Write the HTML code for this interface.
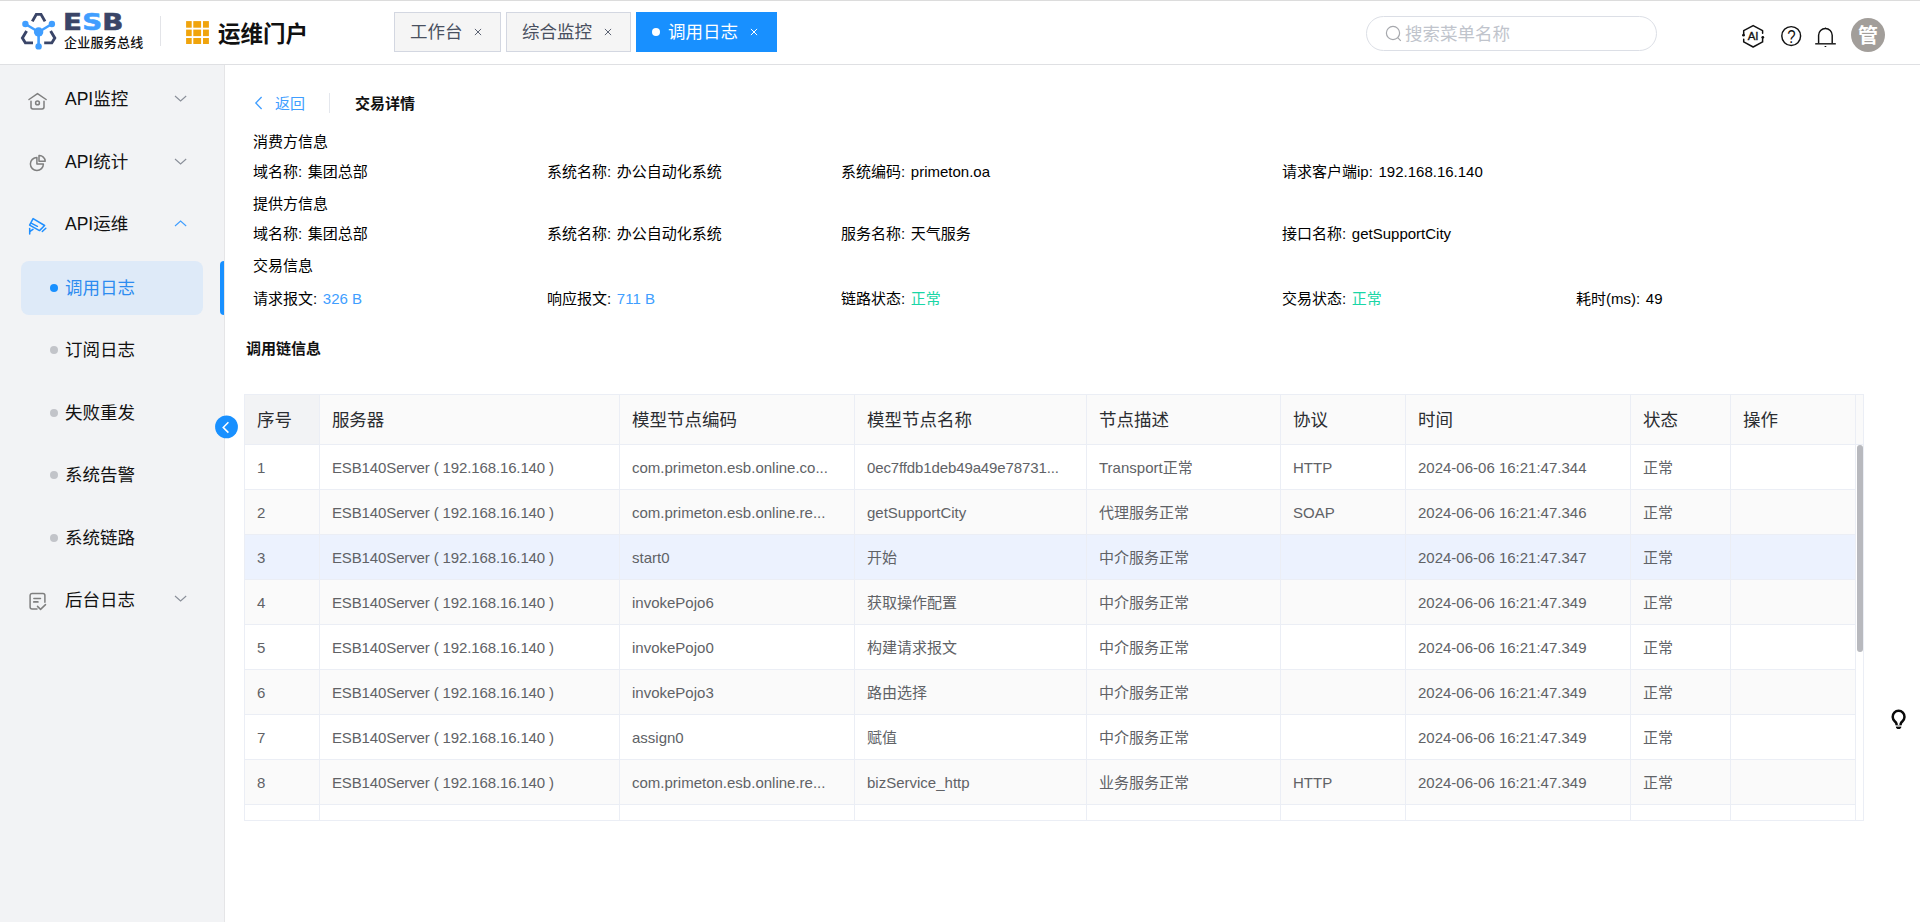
<!DOCTYPE html>
<html lang="zh-CN">
<head>
<meta charset="utf-8">
<title>ESB 运维门户 - 调用日志</title>
<style>
*{box-sizing:border-box;margin:0;padding:0}
html,body{width:1920px;height:922px;overflow:hidden;background:#fff}
body{font-family:"Liberation Sans","Noto Sans CJK SC",sans-serif;color:#1a1a1a;position:relative;font-size:15px}
.abs{position:absolute}
/* header */
#hdr{position:absolute;left:0;top:0;width:1920px;height:65px;background:#fff;border-bottom:1px solid #dfe0e3}
#topline{position:absolute;left:0;top:0;width:1920px;height:1px;background:#dcdcdc}
#logo{position:absolute;left:20px;top:12px;width:38px;height:38px}
#esb{position:absolute;left:62.6px;top:9.4px;font-family:"DejaVu Sans","Liberation Sans",sans-serif;font-weight:bold;font-size:22.5px;line-height:26px;letter-spacing:0.2px;color:#3a4567;-webkit-text-stroke:0.55px currentColor;transform-origin:0 0;transform:scaleX(1.23)}
#esb b{color:#409eff}
#esbsub{position:absolute;left:64px;top:34px;letter-spacing:0.25px;font-size:13px;line-height:18px;color:#111;font-weight:500;white-space:nowrap}
#hdiv{position:absolute;left:160px;top:16px;width:1px;height:30px;background:#e3e4e8}
#grid{position:absolute;left:186px;top:21px;width:23px;height:23px}
#portal{position:absolute;left:218px;top:18px;font-size:22.5px;line-height:34px;font-weight:bold;color:#111;white-space:nowrap}
.tab{position:absolute;top:12px;height:40px;border:1px solid #d3d7e1;background:#f5f5f5;color:#495060;font-size:17.5px;line-height:38px;white-space:nowrap}
.tab .x{position:absolute}
.tab.on{background:#1890ff;border-color:#1890ff;color:#fff}
.tab.on .x{color:#fff}
#search{position:absolute;left:1366px;top:16px;width:291px;height:35px;border:1px solid #dcdfe6;border-radius:18px;background:#fff}
#search span{position:absolute;left:38px;top:0;line-height:35px;font-size:17.5px;color:#c0c4cc;white-space:nowrap}
#avatar{position:absolute;left:1851px;top:18px;width:34px;height:34px;border-radius:50%;background:#a29e9a;color:#fff;font-weight:bold;font-size:20px;line-height:37px;text-align:center}
/* sidebar */
#side{position:absolute;left:0;top:65px;width:225px;height:857px;background:#f2f3f5;border-right:1px solid #e5e5e7}
.mi{position:absolute;left:65px;font-size:17.5px;line-height:24px;color:#111;white-space:nowrap}
.sub{position:absolute;left:65px;font-size:17.5px;line-height:24px;color:#111;white-space:nowrap}
.dot{position:absolute;left:50px;width:8px;height:8px;margin-top:-0.5px;border-radius:50%;background:#c2c4c9}
#actbg{position:absolute;left:21px;width:182px;height:54px;border-radius:8px;background:#deeaf8}
#actbar{position:absolute;left:220px;width:4px;height:54px;border-radius:5px 0 0 5px;background:#1890ff}
#collapse{position:absolute;left:213px;top:414px;width:27px;height:27px}
/* content */
.t{position:absolute;white-space:nowrap;font-size:15px;line-height:20px;color:#000;word-spacing:1.5px}
.t span{word-spacing:0}
.blue{color:#409eff}.green{color:#1ad6a6}
/* table */
#tbl{position:absolute;left:244px;top:394px;width:1620px;height:427px;border:1px solid #ebeef5;overflow:hidden;background:#fff}
.row{position:absolute;left:0;width:1611px;height:45px;border-bottom:1px solid #ebeef5}
.row.h{height:50px;background:#fafafa}
.row.e{background:#fafafa}
.row.hv{background:#ecf2fe}
.c{position:absolute;top:0;height:100%;border-left:1px solid #ebeef5;padding-left:12px;font-size:15px;color:#606266;line-height:45px;white-space:nowrap;overflow:hidden}
.row.h .c{font-size:17.5px;color:#2b2d31;line-height:51px}
.c1{left:-1px;width:75px}.c2{left:74px;width:300px;letter-spacing:-0.13px}.c3{left:374px;width:235px}.c4{left:609px;width:232px}.c5{left:841px;width:194px}.c6{left:1035px;width:125px}.c7{left:1160px;width:225px}.c8{left:1385px;width:100px}.c9{left:1485px;width:125px}
</style>
</head>
<body>
<div id="hdr">
<div id="topline"></div>
<svg id="logo" viewBox="20 12 38 38" width="38" height="38">
 <g fill="none" stroke="#3a4568" stroke-width="2.9" stroke-linejoin="miter">
  <polyline points="32.3,21.4 36.3,14.4 41,14.4 45,21.4"/>
  <polyline points="26.6,31 22.4,38 25.4,42.9 33,42.9"/>
  <polyline points="50.6,31 54.8,38 51.8,42.9 44.2,42.9"/>
 </g>
 <g stroke="#409eff" stroke-width="2.6" fill="#409eff">
  <line x1="38.6" y1="32" x2="25.4" y2="24"/>
  <line x1="38.6" y1="32" x2="51.9" y2="24"/>
  <line x1="38.6" y1="32" x2="38.6" y2="46.4"/>
 </g>
 <g fill="#409eff">
  <circle cx="38.6" cy="32" r="4.7"/>
  <circle cx="25.4" cy="24" r="3.2"/>
  <circle cx="51.9" cy="24" r="3.2"/>
  <circle cx="38.6" cy="46.4" r="3.2"/>
 </g>
</svg>
<div id="esb">E<b>S</b>B</div>
<div id="esbsub">企业服务总线</div>
<div id="hdiv"></div>
<svg id="grid" viewBox="0 0 23 23" width="23" height="23"><g fill="#f0a40c"><rect x="0.1" y="0.1" width="5.6" height="6.6"/><rect x="7.3" y="0.1" width="7.8" height="6.6"/><rect x="17" y="0.1" width="5.9" height="6.6"/><rect x="0.1" y="8.6" width="5.6" height="6.5"/><rect x="7.3" y="8.6" width="7.8" height="6.5"/><rect x="17" y="8.6" width="5.9" height="6.5"/><rect x="0.1" y="17" width="5.6" height="6.0"/><rect x="7.3" y="17" width="7.8" height="6.0"/><rect x="17" y="17" width="5.9" height="6.0"/></g></svg>
<div id="portal">运维门户</div>
<div class="tab" style="left:394px;width:107px"><span style="position:absolute;left:15px">工作台</span><svg class="x" style="left:79px;top:15px" width="8" height="8" viewBox="0 0 8 8"><path d="M0.9 0.9 L7.1 7.1 M7.1 0.9 L0.9 7.1" stroke="#5c6373" stroke-width="1" fill="none"/></svg></div>
<div class="tab" style="left:506px;width:125px"><span style="position:absolute;left:15px">综合监控</span><svg class="x" style="left:97px;top:15px" width="8" height="8" viewBox="0 0 8 8"><path d="M0.9 0.9 L7.1 7.1 M7.1 0.9 L0.9 7.1" stroke="#5c6373" stroke-width="1" fill="none"/></svg></div>
<div class="tab on" style="left:636px;width:141px"><i style="position:absolute;left:15px;top:15px;width:8px;height:8px;border-radius:50%;background:#fff"></i><span style="position:absolute;left:31px">调用日志</span><svg class="x" style="left:112.5px;top:15px" width="8" height="8" viewBox="0 0 8 8"><path d="M0.9 0.9 L7.1 7.1 M7.1 0.9 L0.9 7.1" stroke="#fff" stroke-width="1" fill="none"/></svg></div>
<div id="search">
<svg style="position:absolute;left:16.5px;top:6.5px" width="20" height="20" viewBox="0 0 20 20"><circle cx="9" cy="9" r="6.6" fill="none" stroke="#a6a8ad" stroke-width="1.2"/><line x1="13.7" y1="13.7" x2="16.8" y2="16.8" stroke="#a6a8ad" stroke-width="1.2"/></svg>
<span>搜索菜单名称</span></div>
<svg class="abs" style="left:1741px;top:24px" width="24" height="24" viewBox="0 0 24 24"><g fill="none" stroke="#111" stroke-width="1.5" stroke-linejoin="round" stroke-linecap="round"><path d="M2.7 11 V6.7 L12.15 1.6 L21.6 6.7 V9.2"/><path d="M21.6 13.4 V17.9 L12.15 23 L2.7 17.9 V15.2"/></g><circle cx="2.5" cy="11.2" r="1.35" fill="#111"/><circle cx="21.8" cy="13.3" r="1.35" fill="#111"/><text x="12.1" y="16.3" font-family="Liberation Sans, sans-serif" font-size="11.5" text-anchor="middle" fill="#111" stroke="#111" stroke-width="0.35">AI</text></svg>
<svg class="abs" style="left:1780px;top:25px" width="23" height="23" viewBox="0 0 23 23"><circle cx="11.2" cy="11" r="9.4" fill="none" stroke="#111" stroke-width="1.45"/><text x="13.2" y="18.2" font-family="Liberation Sans, sans-serif" font-size="17.5" text-anchor="middle" fill="#111" transform="scale(0.86 1)">?</text></svg>
<svg class="abs" style="left:1814px;top:25px" width="24" height="24" viewBox="0 0 24 24"><path d="M4.6 18.6 V10.3 a6.8 6.8 0 0 1 13.6 0 V18.6" fill="none" stroke="#111" stroke-width="1.45"/><path d="M10.3 4 L11.4 2.2 L12.5 4 Z" fill="#111"/><line x1="1.2" y1="18.8" x2="21.8" y2="18.8" stroke="#222" stroke-width="1.5"/><rect x="10.5" y="21" width="1.9" height="1.1" rx="0.5" fill="#111"/></svg>
<div id="avatar">管</div>
</div>
<div id="side">
<svg class="abs" style="left:28px;top:27px" width="20" height="19" viewBox="0 0 20 19"><g fill="none" stroke="#7f7f7f" stroke-width="1.5" stroke-linecap="round" stroke-linejoin="round"><path d="M1 7.5 L9.5 1.6 L18.1 7.5"/><path d="M3 9.2 V15 a1.9 1.9 0 0 0 1.9 1.9 H14.1 a1.9 1.9 0 0 0 1.9 -1.9 V9.2"/><circle cx="9.5" cy="10.9" r="1.9"/></g></svg>
<svg class="abs" style="left:28px;top:89px" width="20" height="19" viewBox="0 0 20 19"><g fill="none" stroke="#7f7f7f" stroke-width="1.5" stroke-linejoin="round"><path d="M8.9 3.5 A6.5 6.5 0 1 0 15.4 10 H8.9 Z"/><path d="M11 1.6 A5.8 5.8 0 0 1 17.2 7.2 H11 Z"/></g></svg>
<svg class="abs" style="left:28px;top:152px" width="20" height="19" viewBox="0 0 20 19"><g fill="none" stroke="#1f8fff" stroke-width="1.5" stroke-linejoin="round" stroke-linecap="round"><path d="M5.1 1.6 L16.6 8.5 L11.5 13.6 L1.6 8.1 Z"/><path d="M3.6 6.4 L9.4 9.3"/><path d="M14.3 14.5 L17.8 11.2"/><path d="M1.7 11.5 V17.1"/><path d="M1.7 14.5 L5 12.4"/></g></svg>
<svg class="abs" style="left:28px;top:527px" width="20" height="19" viewBox="0 0 20 19"><g fill="none" stroke="#7f7f7f" stroke-width="1.5" stroke-linecap="round" stroke-linejoin="round"><path d="M9 17 H4.1 a2 2 0 0 1 -2 -2 V3.5 a2 2 0 0 1 2 -2 H14.9 a2 2 0 0 1 2 2 V10.3"/><path d="M5.9 6.4 H12.5"/><path d="M5.9 9.9 H9.8" stroke-width="1.9"/><path d="M9.5 14.4 L12.55 17.4 L17.5 12.6"/></g></svg>
<svg class="abs" style="left:174px;top:30.099999999999994px" width="13.2" height="7" viewBox="0 0 13.2 7"><path d="M1 1 L6.6 6 L12.2 1" fill="none" stroke="#8a8f99" stroke-width="1.1"/></svg>
<svg class="abs" style="left:174px;top:92.69999999999999px" width="13.2" height="7" viewBox="0 0 13.2 7"><path d="M1 1 L6.6 6 L12.2 1" fill="none" stroke="#8a8f99" stroke-width="1.1"/></svg>
<svg class="abs" style="left:174px;top:154.8px" width="13.2" height="7" viewBox="0 0 13.2 7"><path d="M1 6 L6.6 1 L12.2 6" fill="none" stroke="#409eff" stroke-width="1.1"/></svg>
<svg class="abs" style="left:174px;top:530.2px" width="13.2" height="7" viewBox="0 0 13.2 7"><path d="M1 1 L6.6 6 L12.2 1" fill="none" stroke="#8a8f99" stroke-width="1.1"/></svg>
<div class="mi" style="top:22px">API监控</div>
<div class="mi" style="top:84.6px">API统计</div>
<div class="mi" style="top:147.2px">API运维</div>
<div class="mi" style="top:522.6px">后台日志</div>
<div id="actbg" style="top:196px"></div><div id="actbar" style="top:196px"></div>
<i class="dot" style="top:219px;width:8px;height:8px;background:#1890ff"></i><div class="sub" style="top:210.60000000000002px;color:#2d8cf0">调用日志</div>
<i class="dot" style="top:281.5px"></i><div class="sub" style="top:273px">订阅日志</div>
<i class="dot" style="top:344.0px"></i><div class="sub" style="top:335.5px">失败重发</div>
<i class="dot" style="top:406.5px"></i><div class="sub" style="top:398px">系统告警</div>
<i class="dot" style="top:469.0px"></i><div class="sub" style="top:460.5px">系统链路</div>
</div>
<div id="collapse"><svg width="27" height="27" viewBox="0 0 27 27" style="display:block"><circle cx="13.5" cy="12.9" r="11.4" fill="#1890ff"/><path d="M15.4 8.2 L10.2 13.4 L15.4 18.6" fill="none" stroke="#fff" stroke-width="1.5"/></svg></div>
<div id="main">
<svg class="abs" style="left:253.6px;top:96.3px" width="10" height="14" viewBox="0 0 10 14"><path d="M7.6 1 L1.8 7 L7.6 13" fill="none" stroke="#409eff" stroke-width="1.3"/></svg>
<div class="t blue" style="left:275px;top:94px">返回</div>
<div class="abs" style="left:329px;top:93px;width:1px;height:20px;background:#e4e7ed"></div>
<div class="t" style="left:355px;top:94px;font-weight:bold;color:#111">交易详情</div>
<div class="t" style="left:253px;top:132px;">消费方信息</div>
<div class="t" style="left:253px;top:162px;">域名称: 集团总部</div>
<div class="t" style="left:547px;top:162px;">系统名称: 办公自动化系统</div>
<div class="t" style="left:841px;top:162px;">系统编码: primeton.oa</div>
<div class="t" style="left:1282px;top:162px;">请求客户端ip: 192.168.16.140</div>
<div class="t" style="left:253px;top:194px;">提供方信息</div>
<div class="t" style="left:253px;top:224px;">域名称: 集团总部</div>
<div class="t" style="left:547px;top:224px;">系统名称: 办公自动化系统</div>
<div class="t" style="left:841px;top:224px;">服务名称: 天气服务</div>
<div class="t" style="left:1282px;top:224px;">接口名称: getSupportCity</div>
<div class="t" style="left:253px;top:256px;">交易信息</div>
<div class="t" style="left:253px;top:289px;">请求报文: <span class="blue">326 B</span></div>
<div class="t" style="left:547px;top:289px;">响应报文: <span class="blue">711 B</span></div>
<div class="t" style="left:841px;top:289px;">链路状态: <span class="green">正常</span></div>
<div class="t" style="left:1282px;top:289px;">交易状态: <span class="green">正常</span></div>
<div class="t" style="left:1576px;top:289px;">耗时(ms): 49</div>
<div class="t" style="left:246px;top:339px;font-weight:bold;color:#111">调用链信息</div>
<div id="tbl">
<div class="row h" style="top:0"><div class="c c1" style="background:#f2f3f5">序号</div><div class="c c2">服务器</div><div class="c c3">模型节点编码</div><div class="c c4">模型节点名称</div><div class="c c5">节点描述</div><div class="c c6">协议</div><div class="c c7">时间</div><div class="c c8">状态</div><div class="c c9">操作</div></div>
<div class="row" style="top:50px"><div class="c c1">1</div><div class="c c2">ESB140Server ( 192.168.16.140 )</div><div class="c c3">com.primeton.esb.online.co...</div><div class="c c4" style="letter-spacing:-0.12px">0ec7ffdb1deb49a49e78731...</div><div class="c c5">Transport正常</div><div class="c c6">HTTP</div><div class="c c7">2024-06-06 16:21:47.344</div><div class="c c8">正常</div><div class="c c9"></div></div>
<div class="row e" style="top:95px"><div class="c c1">2</div><div class="c c2">ESB140Server ( 192.168.16.140 )</div><div class="c c3">com.primeton.esb.online.re...</div><div class="c c4">getSupportCity</div><div class="c c5">代理服务正常</div><div class="c c6">SOAP</div><div class="c c7">2024-06-06 16:21:47.346</div><div class="c c8">正常</div><div class="c c9"></div></div>
<div class="row hv" style="top:140px"><div class="c c1">3</div><div class="c c2">ESB140Server ( 192.168.16.140 )</div><div class="c c3">start0</div><div class="c c4">开始</div><div class="c c5">中介服务正常</div><div class="c c6"></div><div class="c c7">2024-06-06 16:21:47.347</div><div class="c c8">正常</div><div class="c c9"></div></div>
<div class="row e" style="top:185px"><div class="c c1">4</div><div class="c c2">ESB140Server ( 192.168.16.140 )</div><div class="c c3">invokePojo6</div><div class="c c4">获取操作配置</div><div class="c c5">中介服务正常</div><div class="c c6"></div><div class="c c7">2024-06-06 16:21:47.349</div><div class="c c8">正常</div><div class="c c9"></div></div>
<div class="row" style="top:230px"><div class="c c1">5</div><div class="c c2">ESB140Server ( 192.168.16.140 )</div><div class="c c3">invokePojo0</div><div class="c c4">构建请求报文</div><div class="c c5">中介服务正常</div><div class="c c6"></div><div class="c c7">2024-06-06 16:21:47.349</div><div class="c c8">正常</div><div class="c c9"></div></div>
<div class="row e" style="top:275px"><div class="c c1">6</div><div class="c c2">ESB140Server ( 192.168.16.140 )</div><div class="c c3">invokePojo3</div><div class="c c4">路由选择</div><div class="c c5">中介服务正常</div><div class="c c6"></div><div class="c c7">2024-06-06 16:21:47.349</div><div class="c c8">正常</div><div class="c c9"></div></div>
<div class="row" style="top:320px"><div class="c c1">7</div><div class="c c2">ESB140Server ( 192.168.16.140 )</div><div class="c c3">assign0</div><div class="c c4">赋值</div><div class="c c5">中介服务正常</div><div class="c c6"></div><div class="c c7">2024-06-06 16:21:47.349</div><div class="c c8">正常</div><div class="c c9"></div></div>
<div class="row e" style="top:365px"><div class="c c1">8</div><div class="c c2">ESB140Server ( 192.168.16.140 )</div><div class="c c3">com.primeton.esb.online.re...</div><div class="c c4">bizService_http</div><div class="c c5">业务服务正常</div><div class="c c6">HTTP</div><div class="c c7">2024-06-06 16:21:47.349</div><div class="c c8">正常</div><div class="c c9"></div></div>
<div class="row" style="top:410px"><div class="c c1"></div><div class="c c2"></div><div class="c c3"></div><div class="c c4"></div><div class="c c5"></div><div class="c c6"></div><div class="c c7"></div><div class="c c8"></div><div class="c c9"></div></div>
<div class="abs" style="left:1610px;top:0;width:1px;height:427px;background:#ebeef5"></div>
<div class="abs" style="left:1610px;top:0;width:8px;height:50px;background:#fafafa;border-left:1px solid #ebeef5;border-bottom:1px solid #ebeef5"></div>
<div class="abs" style="left:1612px;top:50px;width:6px;height:207px;border-radius:3px;background:#b8b9be"></div>
</div>
<svg class="abs" style="left:1888px;top:707px" width="22" height="24" viewBox="0 0 22 24"><path d="M8.6 18.2 L8.5 16.8 Q8.2 15.5 6.7 14.2 A5.9 5.9 0 1 1 14.5 14.2 Q13 15.5 12.7 16.8 L12.6 18.2" fill="none" stroke="#0a0a0a" stroke-width="2.5"/><rect x="7.9" y="18.3" width="5.4" height="1.5" fill="#8a8a8a"/><path d="M8 20 H13.2 V20.7 L11.8 22.1 H9.4 L8 20.7 Z" fill="#0a0a0a"/></svg>
</div>
</body>
</html>
